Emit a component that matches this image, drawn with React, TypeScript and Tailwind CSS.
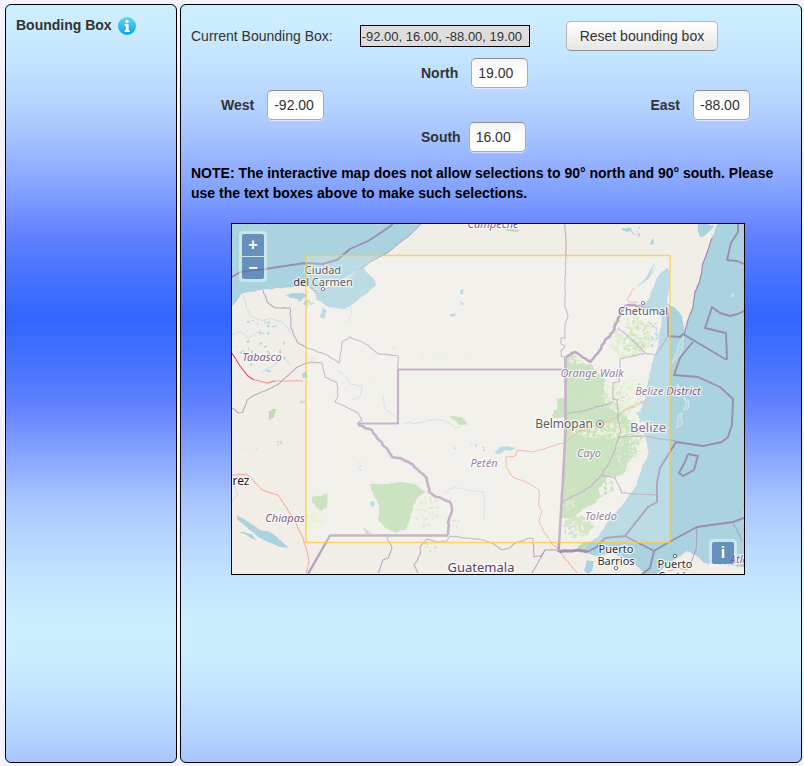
import { useState } from "react";

type Pt = [number, number];

/* Turns "x,y x,y" into points. */
function parse(s: string): Pt[] {
  return s
    .trim()
    .split(/\s+/)
    .map((p) => p.split(",").map(Number) as Pt);
}

/* Builds a path whose segments wander a little, like a river or a coast. */
function rough(s: string, amp = 1, close = false): string {
  let seed = 7;
  const rnd = () => {
    seed = (seed * 16807) % 2147483647;
    return seed / 2147483647 - 0.5;
  };
  const pts = parse(s);
  if (close) pts.push(pts[0]);
  let d = `M${pts[0][0]} ${pts[0][1]}`;
  for (let i = 1; i < pts.length; i++) {
    const [ax, ay] = pts[i - 1];
    const [bx, by] = pts[i];
    const n = Math.max(1, Math.round(Math.hypot(bx - ax, by - ay) / 3));
    for (let k = 1; k < n; k++) {
      const t = k / n;
      const x = ax + (bx - ax) * t + rnd() * 2 * amp;
      const y = ay + (by - ay) * t + rnd() * 2 * amp;
      d += `L${x.toFixed(1)} ${y.toFixed(1)}`;
    }
    d += `L${bx} ${by}`;
  }
  return close ? d + "Z" : d;
}

/* Small irregular blots scattered inside an ellipse. */
function blots(cx: number, cy: number, rx: number, ry: number, n: number, size: number, seed0: number): string {
  let seed = seed0;
  const rnd = () => {
    seed = (seed * 16807) % 2147483647;
    return seed / 2147483647;
  };
  let d = "";
  for (let i = 0; i < n; i++) {
    const a = rnd() * 6.283;
    const r = Math.sqrt(rnd());
    const x = cx + Math.cos(a) * r * rx;
    const y = cy + Math.sin(a) * r * ry;
    const w = size * (0.4 + rnd());
    const h = size * (0.4 + rnd());
    d += `M${x.toFixed(1)} ${y.toFixed(1)}l${w.toFixed(1)} ${(-h / 2).toFixed(1)}l${(w / 3).toFixed(1)} ${h.toFixed(1)}l${(-w).toFixed(1)} ${(h / 3).toFixed(1)}Z`;
  }
  return d;
}

const SEA = "#aad3df";
const LAND = "#f1eee8";
const GREEN = "#bedcb2";

const seas = [
  "232,224 421,224 410,235 397,245 387,253 370,262 363,268 366,272 373,278 376,285 368,292 358,300 345,309 330,307 317,300 315,293 309,286 290,287 267,289 243,293 232,306",
  "718,224 712,238 708,250 703,263 700,280 695,292 693,307 688,320 684,335 682,317 676,309 667,303 669,290 669,270 667,268 657,278 650,297 640,311 655,312 662,317 660,330 658,347 652,363 648,383 645,400 638,415 642,428 647,442 649,453 642,468 637,485 625,502 610,518 597,538 587,543 583,551 597,556 612,553 633,562 645,574 656,574 665,566 678,557 687,551 697,556 703,562 717,565 744,567 744,224",
  "698,224 706,224 714,226 704,236 700,237 698,231",
];

const greens = [
  "565,360 572,354 578,357 586,365 590,364 599,374 606,380 603,388 609,396 616,399 612,404 624,410 628,420 638,426 643,438 637,447 639,456 628,462 624,473 612,480 614,490 603,495 596,503 583,509 573,518 560,517 562,480 564,430",
  "557,398 566,398 566,418 553,418 553,410 557,410",
  "368,484 385,484 403,482 415,484 425,492 418,498 413,505 412,512 407,528 397,533 385,528 378,520 379,505 373,492",
  "312,496 320,496 327,493 327,508 320,511 312,502",
  "448,416 462,417 468,425 458,424",
  "504,229 518,229 519,232 506,231",
  "268,411 276,409 274,417 269,420",
  "361,525 368,531 372,535 366,534",
  "578,546 586,542 587,551 577,551",
  "632,345 642,340 648,344 640,352",
];

const lakes = [
  "237,515 247,521 260,530 270,532 277,537 289,548 280,547 268,542 258,537 245,526 237,519",
  "237,531 252,534 256,541 248,536",
  "495,452 500,447 508,446 516,448 510,451 505,450 502,453 496,454",
  "286,295 294,293 303,293 308,296 300,299 290,298",
  "323,307 327,310 324,319 320,317",
  "302,374 306,371 308,377 303,378",
  "460,290 464,289 463,294 460,294",
  "459,300 465,304 462,305",
  "450,314 455,313 456,316 451,317",
  "370,502 374,501 375,505 372,507",
  "587,560 594,561 592,571 588,574 584,571",
  "622,228 632,228 628,232 622,230",
  "650,245 653,238 654,244",
  "634,289 645,279 655,262 650,277 640,285",
];

const islets = [
  "680,341 684,337 682,350 677,358 672,363 676,352",
  "678,384 682,388 680,397 676,394",
  "684,397 689,401 688,409 683,410 686,404",
  "678,415 682,413 682,424 676,428",
  "731,295 734,294 733,297",
];

const thinBorders = [
  "565,224 566,243 565,280 565,308 568,315 565,325 565,338 561,338 561,344 565,346 561,351 561,356 566,357",
  "263,290 268,303 275,308 290,308 291,328 297,342 307,348 327,355 339,363 342,342 350,337 368,345 378,354 398,356 398,369",
  "312,362 307,363 297,367 285,378 277,385 260,393 255,395 247,400 243,412 238,413 232,408",
  "312,362 322,363 325,377 337,383 338,395 335,402 348,408 358,413 362,420 358,423",
  "450,536 483,540 492,543 502,550 510,548 515,543 530,538 533,539 534,557 542,556 545,550 558,550",
  "545,550 532,573",
  "450,536 447,541 438,542 427,539 420,547 420,555 414,565 418,573",
  "387,537 392,548 388,558 383,560 378,573",
  "618,328 627,335 645,353 620,359 619,382 613,383 613,399 617,400 618,420 621,432 613,455 602,475 590,487 570,498 562,502",
  "645,353 656,355 668,336",
  "617,437 642,436 676,441",
  "602,475 615,478 622,493 656,495",
  "566,414 587,410 613,402",
  "697,527 696,550 688,568",
  "733,522 742,541",
];

const roads = [
  "267,383 275,381 303,381",
  "232,475 247,474 262,490 278,495 293,518 303,538 307,552 309,562 306,573",
  "650,399 625,410 615,418 600,424 578,432 566,442 547,448 532,452 517,450 515,456 506,457 506,467 513,477 528,483 539,490 539,505 542,512 539,522 548,538 558,550 577,573",
  "634,288 627,300 629,302 638,302",
  "668,571 678,568 688,570",
];

const streams = [
  "244,295 246,306 250,316 262,321 270,318 282,322 291,333",
  "232,334 242,332 248,338 262,330",
  "262,372 275,364 285,357 290,366",
  "338,370 346,377 350,384 362,386 360,396 352,400",
  "384,395 384,408 396,418",
  "404,423 418,423 430,420 445,420 455,428 464,424",
  "445,492 455,487 470,491 484,492 484,520",
  "349,322 352,313 350,305",
  "232,503 238,493 234,485",
  "642,285 652,274 655,266",
];

const seaLines = [
  "232,277 240,272 265,269 305,263 322,264 337,260 350,249 368,241 385,230 393,224",
  "738,224 738,232 731,243 727,260 737,261 744,264",
  "668,312 668,336 680,337 683,334 725,359 727,359 726,333 705,328 712,307 720,313 730,316 738,314 744,311",
  "693,342 687,349 680,358 674,375 698,377 720,387 733,399 732,425 728,437 722,442 703,446 676,442 660,468 657,483 657,502 648,507 625,536 654,551 650,568 642,574",
  "587,552 597,547 605,538 625,536",
  "654,551 671,541 697,527 733,522 744,518",
  "688,454 698,456 694,470 683,476 679,473 685,462 688,454",
];

function line(s: string) {
  return parse(s)
    .map((p, i) => `${i ? "L" : "M"}${p[0]} ${p[1]}`)
    .join("");
}

type Place = { t: string; x: number; y: number; s?: string; c?: string };

const region = "italic text-[11px]";
const town = "text-[11px]";

const places: Place[] = [
  { t: "Campeche", x: 493, y: 228, s: region, c: "#82648a" },
  { t: "Tabasco", x: 262, y: 361, s: region, c: "#7d5c86" },
  { t: "Orange Walk", x: 592, y: 377, s: region, c: "#82648a" },
  { t: "Belize District", x: 668, y: 395, s: region, c: "#7d5c86" },
  { t: "Cayo", x: 589, y: 457, s: region, c: "#82648a" },
  { t: "Petén", x: 484, y: 467, s: region, c: "#82648a" },
  { t: "Toledo", x: 601, y: 520, s: region, c: "#82648a" },
  { t: "Chiapas", x: 285, y: 522, s: region, c: "#7d5c86" },
  { t: "Atlántida", x: 752, y: 563, s: region, c: "#82648a" },
  { t: "Ciudad", x: 323, y: 274, s: town },
  { t: "del Carmen", x: 323, y: 286, s: town },
  { t: "Chetumal", x: 643, y: 315, s: town },
  { t: "Puerto", x: 616, y: 553, s: town },
  { t: "Barrios", x: 616, y: 565, s: town },
  { t: "Puerto", x: 675, y: 568, s: town },
  { t: "Cortés", x: 675, y: 580, s: town },
  { t: "rez", x: 241, y: 485, s: "text-[12px]", c: "#222" },
  { t: "Belmopan", x: 564, y: 428, s: "text-[12px]" },
  { t: "Belize", x: 648, y: 432, s: "text-[13px]", c: "#704f78" },
  { t: "Guatemala", x: 481, y: 572, s: "text-[13px]", c: "#603f68" },
];

function MapDrawing() {
  return (
    <svg
      viewBox="232 224 512 350"
      className="block h-auto w-full overflow-hidden font-['Noto_Sans','Open_Sans',sans-serif]"
      role="img"
      aria-label="Map of Belize, northern Guatemala and southern Mexico"
    >
      <rect x="232" y="224" width="512" height="350" fill={LAND} />
      {seas.map((s) => (
        <path key={s} d={rough(s, 0.6, true)} fill={SEA} stroke="#9a8fb8" strokeOpacity=".25" strokeWidth=".6" />
      ))}
      <path d={rough("313,288 318,292 330,287 345,282 357,273 363,267 359,270 345,278 330,284 320,289", 0.3, true)} fill={LAND} />
      <path d={rough("308,286 316,291 330,287 346,280 358,271 370,262 387,253 410,235 421,224", 0.3)} fill="none" stroke="#a898bc" strokeWidth=".8" />
      <path d={rough("712,238 708,250 703,263 700,280 695,292 693,307 688,320 684,335", 0.3)} fill="none" stroke="#a08fb4" strokeWidth="1.2" />
      {greens.map((s) => (
        <path key={s} d={rough(s, 1, true)} fill={GREEN} />
      ))}
      <path d={blots(628, 335, 21, 22, 150, 3, 1123)} fill="#d9ebc9" />
      <path d={blots(634, 338, 14, 18, 50, 2, 1187)} fill="#c3dfae" />
      <path d={blots(622, 394, 20, 18, 130, 3, 3137)} fill="#e3efd2" />
      <path d={blots(620, 400, 18, 14, 60, 2, 3191)} fill="#c8e2b9" />
      <path d={blots(626, 440, 12, 34, 90, 2, 5119)} fill="#d9ebc9" />
      <path d={blots(598, 430, 30, 8, 110, 2, 7129)} fill="#e9f1cf" />
      <path d={blots(586, 392, 18, 26, 50, 1, 7331)} fill="#d3e8c4" />
      <path d={blots(576, 359, 8, 5, 22, 2, 1433)} fill={LAND} />
      <path d={blots(636, 436, 8, 34, 80, 2, 9311)} fill={LAND} />
      <path d={blots(612, 490, 14, 14, 60, 3, 1733)} fill={LAND} />
      <path d={blots(576, 526, 14, 10, 70, 3, 1931)} fill="#c8e2b9" />
      <path d={blots(568, 505, 6, 4, 12, 2, 1327)} fill="#d6eac6" />
      <path d={blots(426, 512, 12, 16, 50, 2, 2333)} fill="#d3e7c8" />
      <path d={blots(312, 520, 11, 9, 35, 3, 2917)} fill="#e3f0cf" />
      <path d={blots(310, 360, 7, 5, 24, 2, 3733)} fill="#dcedc8" />
      <path d={blots(380, 375, 12, 22, 26, 1, 4127)} fill="#e0edd6" />
      <path d={blots(452, 524, 6, 6, 8, 2, 4337)} fill="#cfe5c2" />
      <path d={blots(278, 443, 4, 3, 5, 2, 4723)} fill="#c8e0bc" />
      <path d={blots(252, 450, 8, 3, 6, 1, 5323)} fill="#c8e0bc" />
      <path d={blots(302, 402, 3, 1, 4, 2, 5923)} fill="#c8e0bc" />
      {lakes.map((s) => (
        <path key={s} d={rough(s, 0.5, true)} fill={SEA} />
      ))}
      <path d={blots(262, 345, 26, 30, 30, 2, 6131)} fill={SEA} />
      <path d={blots(305, 301, 8, 4, 14, 2, 6737)} fill={SEA} />
      <path d={blots(652, 332, 8, 14, 20, 2, 7331)} fill={SEA} />
      <path d={blots(632, 232, 10, 6, 8, 2, 7933)} fill={SEA} />
      <path d={blots(468, 445, 20, 7, 5, 2, 8329)} fill={SEA} />
      <path d={blots(640, 400, 5, 22, 18, 2, 8933)} fill={SEA} />
      <path d={blots(362, 465, 8, 5, 6, 1, 9733)} fill={SEA} />
      <path d={blots(430, 350, 45, 14, 8, 1, 10133)} fill={SEA} />
      <path d={blots(428, 548, 8, 7, 12, 1, 10337)} fill="#a9cfa8" />
      <path d={blots(714, 566, 14, 4, 10, 2, 10733)} fill={LAND} />
      {islets.map((s) => (
        <path key={s} d={rough(s, 0.9, true)} fill={LAND} fillOpacity=".2" stroke="#eef0ea" strokeWidth=".6" />
      ))}
      {streams.map((s) => (
        <path key={s} d={rough(s, 1)} fill="none" stroke={SEA} strokeWidth=".7" strokeOpacity=".85" />
      ))}
      {roads.map((s) => (
        <path key={s} d={rough(s, 0.5)} fill="none" stroke="#f6a694" strokeWidth="1" />
      ))}
      <path d="M232 353L240 366L248 376L254 380" fill="none" stroke="#e2466d" strokeWidth="1.1" />
      <path d="M252 379L267 383L275 381" fill="none" stroke="#f08c80" strokeWidth="1" />
      {thinBorders.map((s) => (
        <path key={s} d={rough(s, 0.5)} fill="none" stroke="#af91b3" strokeWidth="1.1" strokeOpacity=".75" />
      ))}
      <g fill="none" stroke="#b9a2be" strokeLinejoin="round">
        <path d="M566 369.500H398V423.500H358" strokeWidth="2.200" />
        <path d={rough("358,423 365,428 372,430 377,438 385,447 392,457 400,458 410,463 420,472 427,478 429,492 437,497 450,502 452,508 448,522 448,535", 1)} strokeWidth="2.600" />
        <path d="M448 535.500H330L308 574" strokeWidth="2.400" />
        <path d="M565.500 357V430L563 480L558.500 552" strokeWidth="2.600" />
        <path d={rough("559,551 570,551 578,550 587,552", 0.6)} strokeWidth="3" stroke="#a58fae" />
        <path d={rough("566,357 575,352 580,355 590,362 598,353 605,340 613,332 618,318 625,306 634,305 643,307", 0.7)} strokeWidth="2.600" stroke="#b095b6" />
        <path d="M643 307L668 312" strokeWidth="1.600" />
      </g>
      {seaLines.map((s) => (
        <path key={s} d={line(s)} fill="none" stroke="#998db0" strokeWidth="1.900" strokeLinejoin="round" />
      ))}
      <g fill="#fff" stroke="#666" strokeWidth="1">
        <circle cx="323" cy="289" r="1.700" />
        <circle cx="643" cy="303" r="1.700" />
        <circle cx="616" cy="568" r="1.700" />
        <circle cx="675" cy="556" r="1.700" />
        <circle cx="600" cy="424" r="3.500" />
      </g>
      <circle cx="600" cy="424" r="1.400" fill="#333" />
      {places.map((p) => (
        <text
          key={p.t + p.y}
          x={p.x}
          y={p.y}
          textAnchor="middle"
          className={p.s}
          fill={p.c ?? "#333"}
          stroke="#fff"
          strokeOpacity=".7"
          strokeWidth="2.500"
          strokeLinejoin="round"
          paintOrder="stroke"
        >
          {p.t}
        </text>
      ))}
      <rect x="306" y="255.500" width="364" height="287" fill="#fff" fillOpacity=".2" stroke="#ffcc33" strokeOpacity=".8" strokeWidth="1.400" />
    </svg>
  );
}

function InfoIcon() {
  return (
    <svg viewBox="0 0 18 18" className="size-[18px]" aria-hidden="true">
      <defs>
        <linearGradient id="info" x1="0" y1="0" x2="0" y2="1">
          <stop offset="0" stopColor="#62d4f8" />
          <stop offset="1" stopColor="#06a5e0" />
        </linearGradient>
      </defs>
      <circle cx="9" cy="9" r="9" fill="url(#info)" />
      <circle cx="9" cy="4.500" r="1.700" fill="#fff" />
      <path d="M6.500 7H10.600V13.300H11.800V14.900H6.500V13.300H7.800V8.600H6.500Z" fill="#fff" />
    </svg>
  );
}

const panel =
  "rounded-md border border-black px-2.5 bg-[linear-gradient(#ccefff_0px,#ccecff_20px,#c3e4ff_56px,#b4d3ff_100px,#a8c5ff_128px,#9ab6ff_150px,#7f9fff_190px,#6584ff_225px,#4f78ff_256px,#3f6eff_286px,#3366ff_314px,#3f6eff_344px,#4f78ff_374px,#6584ff_405px,#7f9fff_440px,#9ab6ff_476px,#a8c5ff_496px,#b4d3ff_528px,#c3e4ff_574px,#ccecff_610px,#ccefff_630px)] bg-[length:100%_630px]";

const mapButton =
  "flex size-[22px] cursor-pointer items-center justify-center bg-[#003c88]/50 text-base font-bold text-white";

type FieldProps = { id: string; label: string; value: string; onChange: (v: string) => void; gap: string };

function Field({ id, label, value, onChange, gap }: FieldProps) {
  return (
    <div className={`flex items-center ${gap}`}>
      <label htmlFor={id} className="font-bold">
        {label}
      </label>
      <input
        id={id}
        value={value}
        onChange={(e) => onChange(e.target.value)}
        className="h-[30px] w-[57px] rounded-[5px] border border-[#aaa] border-t-[#8f8f8f] bg-linear-to-b from-[#f3f3f3] to-white to-40% px-1.5 shadow-[0_1px_1px_rgba(255,255,255,0.6)]"
      />
    </div>
  );
}

const initial = { north: "19.00", south: "16.00", east: "-88.00", west: "-92.00" };

export default function App() {
  const [box, setBox] = useState(initial);
  const set = (k: keyof typeof initial) => (v: string) => setBox({ ...box, [k]: v });

  return (
    <div className="flex min-h-screen gap-[3px] bg-[#f3f3ff] pt-1 pr-0.5 pb-[3px] pl-[5px] font-['Liberation_Sans',Arial,sans-serif] text-sm text-[#333]">
      <aside className={`w-[172px] shrink-0 pt-2.5 ${panel}`}>
        <div className="flex items-center gap-1.5">
          <h2 className="font-bold">Bounding Box</h2>
          <button type="button" aria-label="About the bounding box" className="mt-0.5 cursor-pointer">
            <InfoIcon />
          </button>
        </div>
      </aside>

      <main className={`min-w-0 flex-1 pt-4 ${panel}`}>
        <div className="flex items-center">
          <label htmlFor="current">Current Bounding Box:</label>
          <input
            id="current"
            readOnly
            value={`${box.west}, ${box.south}, ${box.east}, ${box.north}`}
            className="ml-[27px] h-[22px] w-[170px] border border-black bg-[#ddd] px-px text-[13px]"
          />
          <button
            type="button"
            onClick={() => setBox(initial)}
            className="ml-9 h-[30px] cursor-pointer rounded-[5px] border border-[#b5b5b5] border-b-[#8f8f8f] bg-linear-to-b from-white to-[#e6e6e4] px-[13px]"
          >
            Reset bounding box
          </button>
        </div>

        <div className="mt-[7px] flex flex-col gap-0.5">
          <div className="pl-[230px]">
            <Field id="north" label="North" value={box.north} onChange={set("north")} gap="gap-[13px]" />
          </div>
          <div className="flex justify-between pr-[41px] pl-[30px]">
            <Field id="west" label="West" value={box.west} onChange={set("west")} gap="gap-[13px]" />
            <Field id="east" label="East" value={box.east} onChange={set("east")} gap="gap-[13px]" />
          </div>
          <div className="pl-[230px]">
            <Field id="south" label="South" value={box.south} onChange={set("south")} gap="gap-2" />
          </div>
        </div>

        <p className="mt-[11px] font-bold text-black">
          NOTE: The interactive map does not allow selections to 90° north and 90° south. Please use the text boxes
          above to make such selections.
        </p>

        <div className="relative mt-5 ml-10 w-full max-w-[514px] border border-black">
          <MapDrawing />
          <div className="absolute top-[7px] left-[7px] flex flex-col gap-px rounded bg-white/40 p-[3px]">
            <button type="button" aria-label="Zoom in" className={`rounded-t-xs ${mapButton}`}>
              +
            </button>
            <button type="button" aria-label="Zoom out" className={`rounded-b-xs ${mapButton}`}>
              −
            </button>
          </div>
          <div className="absolute right-[7px] bottom-[7px] rounded bg-white/40 p-[3px]">
            <button type="button" aria-label="Map attribution" className={`rounded-xs ${mapButton}`}>
              i
            </button>
          </div>
        </div>
      </main>
    </div>
  );
}
